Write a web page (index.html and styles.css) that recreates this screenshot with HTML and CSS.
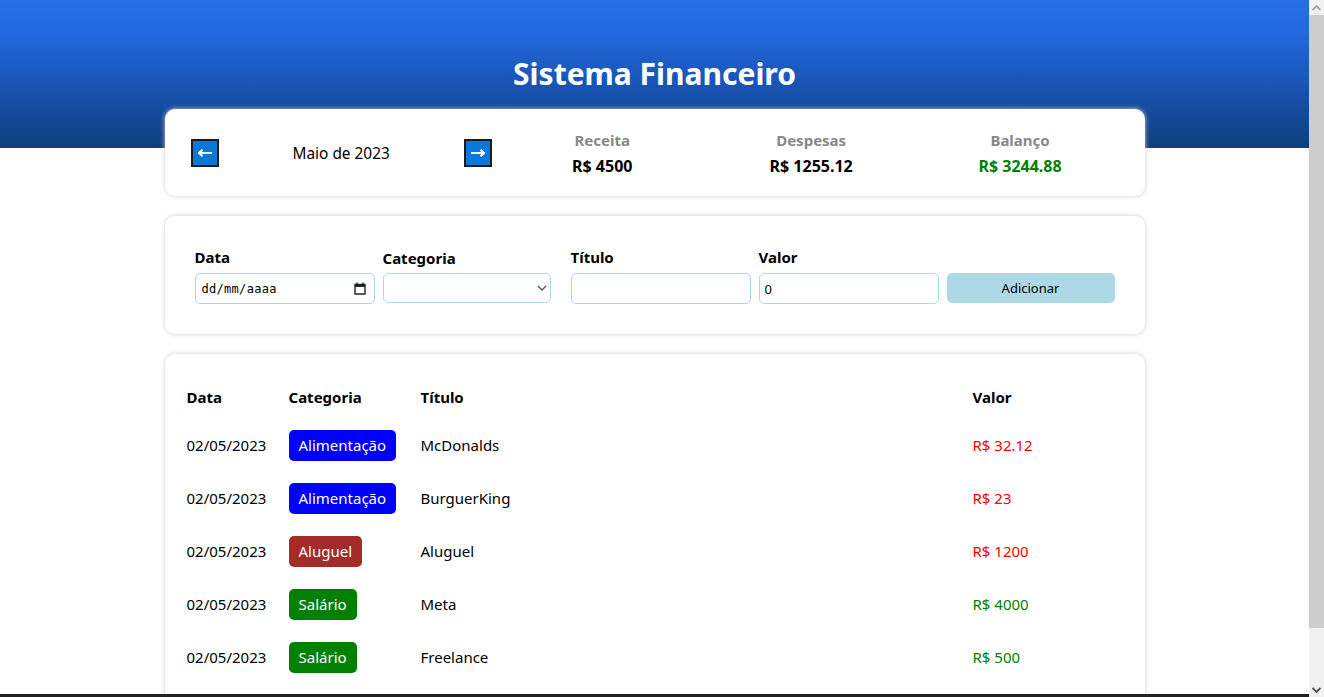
FILE: index.html
```html
<!DOCTYPE html>
<html lang="pt-BR">
<head>
<meta charset="utf-8">
<title>Sistema Financeiro</title>
<link rel="stylesheet" href="styles.css">
</head>
<body>
<header class="header">
  <h1 class="header-title">Sistema Financeiro</h1>
</header>
<main class="body">
  <section class="card info-area">
    <div class="month-area">
      <div class="month-arrow"><button class="arrow-btn" aria-label="Mês anterior"><svg width="16" height="10" viewBox="0 0 16 10"><path d="M15 5H2.5M5.5 1.8L2 5l3.5 3.2" fill="none" stroke="#fff" stroke-width="2"/></svg></button></div>
      <div class="month-title">Maio de 2023</div>
      <div class="month-arrow"><button class="arrow-btn" aria-label="Próximo mês"><svg width="16" height="10" viewBox="0 0 16 10"><path d="M1 5h12.5M10.5 1.8L14 5l-3.5 3.2" fill="none" stroke="#fff" stroke-width="2"/></svg></button></div>
    </div>
    <div class="resume-area">
      <div class="resume-item">
        <div class="resume-title">Receita</div>
        <div class="resume-info">R$ 4500</div>
      </div>
      <div class="resume-item">
        <div class="resume-title">Despesas</div>
        <div class="resume-info">R$ 1255.12</div>
      </div>
      <div class="resume-item">
        <div class="resume-title">Balanço</div>
        <div class="resume-info positive">R$ 3244.88</div>
      </div>
    </div>
  </section>

  <section class="card input-area">
    <label class="input-label">
      <div class="input-title">Data</div>
      <div class="field date-field"><span class="date-text">dd/mm/aaaa</span><svg class="cal-icon" width="12" height="13" viewBox="0 0 12 13"><path d="M1 2.5h10v9.5H1z" fill="none" stroke="#222" stroke-width="1.4"/><path d="M1 2h10v3H1z" fill="#222"/><path d="M3 0.5v2M9 0.5v2" stroke="#222" stroke-width="1.4"/></svg></div>
    </label>
    <label class="input-label">
      <div class="input-title cat-title">Categoria</div>
      <div class="select-wrap">
        <select class="select-field"><option></option><option>Alimentação</option><option>Aluguel</option><option>Salário</option></select>
        <svg class="chevron" width="10" height="6" viewBox="0 0 10 6"><path d="M1 1l4 4 4-4" fill="none" stroke="#555" stroke-width="1.3"/></svg>
      </div>
    </label>
    <label class="input-label">
      <div class="input-title">Título</div>
      <input class="field" type="text">
    </label>
    <label class="input-label">
      <div class="input-title">Valor</div>
      <input class="field" type="text" value="0">
    </label>
    <div class="input-label">
      <div class="input-title">&nbsp;</div>
      <button class="add-btn">Adicionar</button>
    </div>
  </section>

  <section class="card table-card">
    <table class="table">
      <thead>
        <tr>
          <th class="col-date">Data</th>
          <th class="col-cat">Categoria</th>
          <th>Título</th>
          <th class="col-value">Valor</th>
        </tr>
      </thead>
      <tbody>
        <tr><td>02/05/2023</td><td><span class="badge food">Alimentação</span></td><td>McDonalds</td><td class="neg">R$ 32.12</td></tr>
        <tr><td>02/05/2023</td><td><span class="badge food">Alimentação</span></td><td>BurguerKing</td><td class="neg">R$ 23</td></tr>
        <tr><td>02/05/2023</td><td><span class="badge rent">Aluguel</span></td><td>Aluguel</td><td class="neg">R$ 1200</td></tr>
        <tr><td>02/05/2023</td><td><span class="badge salary">Salário</span></td><td>Meta</td><td class="pos">R$ 4000</td></tr>
        <tr><td>02/05/2023</td><td><span class="badge salary">Salário</span></td><td>Freelance</td><td class="pos">R$ 500</td></tr>
      </tbody>
    </table>
  </section>
</main>
<div class="frame-edge"></div>
<div class="scrollbar" aria-hidden="true">
  <div class="sb-btn"><svg width="9" height="6" viewBox="0 0 9 6"><path d="M0.5 5L4.5 1l4 4" fill="none" stroke="#a3a3a3" stroke-width="1.8"/></svg></div>
  <div class="sb-thumb"></div>
  <div class="sb-track"></div>
  <div class="sb-btn"><svg width="9" height="6" viewBox="0 0 9 6"><path d="M0.5 1l4 4 4-4" fill="none" stroke="#505050" stroke-width="1.8"/></svg></div>
</div>
</body>
</html>
```

FILE: styles.css
```css
html, body {
  margin: 0;
  padding: 0;
}
body {
  font-family: "Noto Sans", "Open Sans", sans-serif;
  font-size: 16px;
  color: #000;
  background: #fff;
  padding-right: 15px;
}
.header {
  height: 148px;
  background: linear-gradient(to bottom, #246ee6 0%, #2369e0 20%, #1a55b8 55%, #0e3e7c 100%);
  text-align: center;
  box-sizing: border-box;
  padding-top: 52px;
}
.header-title {
  margin: 0;
  color: #fff;
  font-size: 30px;
  line-height: 44px;
  font-weight: 700;
}
.body {
  max-width: 980px;
  margin: 0 auto;
  padding-bottom: 53px;
}
.card {
  background: #fff;
  border-radius: 10px;
  box-shadow: 0 0 5px #ccc;
  padding: 20px;
}
.info-area {
  margin-top: -39px;
  display: flex;
  align-items: center;
  height: 47px;
}
.month-area {
  flex: 1;
  display: flex;
  align-items: center;
}
.month-arrow {
  width: 40px;
  display: flex;
  justify-content: center;
}
.arrow-btn {
  width: 28px;
  height: 28px;
  box-sizing: border-box;
  padding: 0;
  margin-top: 1px;
  background: #0a78d8;
  border: 2px solid #1b1b1b;
  display: flex;
  align-items: center;
  justify-content: center;
}
.month-title {
  flex: 1;
  text-align: center;
  font-size: 15.4px;
  padding-top: 1px;
}
.resume-area {
  flex: 2;
  display: flex;
}
.resume-item {
  flex: 1;
  text-align: center;
}
.resume-title {
  color: #888;
  font-weight: 700;
  font-size: 15px;
  line-height: 22px;
}
.resume-info {
  font-weight: 700;
  font-size: 16px;
  line-height: 22px;
  margin-top: 4px;
}
.resume-info.positive {
  color: #008000;
}
.input-area {
  margin-top: 20px;
  display: flex;
  align-items: flex-start;
}
.input-label {
  flex: 1;
  margin: 10px;
  min-width: 0;
  display: block;
}
.input-title {
  font-weight: 700;
  font-size: 15px;
  line-height: 22px;
  height: 22px;
  margin-bottom: 5px;
}
.cat-title {
  position: relative;
  top: 1px;
}
.field {
  display: block;
  width: 100%;
  height: 19px;
  padding: 5px;
  border: 1px solid #add8e6;
  border-radius: 5px;
  font-family: "Noto Sans", sans-serif;
  font-size: 13px;
  outline: none;
  box-sizing: content-box;
}
input.field {
  margin: 0;
}
.date-field {
  display: flex;
  align-items: center;
  justify-content: space-between;
}
.date-text {
  font-family: "DejaVu Sans Mono", "Liberation Mono", monospace;
  font-size: 12px;
  padding-left: 1px;
  letter-spacing: 0.3px;
}
.cal-icon {
  margin-right: 3px;
}
.select-wrap {
  position: relative;
  margin-top: 1px;
}
.select-field {
  display: block;
  width: 100%;
  height: 30px;
  border: 1px solid #add8e6;
  border-radius: 5px;
  background: #fff;
  font-family: "Noto Sans", sans-serif;
  font-size: 13px;
  -webkit-appearance: none;
  appearance: none;
  padding: 0 24px 0 5px;
}
.chevron {
  position: absolute;
  right: 4px;
  top: 12px;
  pointer-events: none;
}
.add-btn {
  display: block;
  width: 100%;
  height: 30px;
  margin-top: 1px;
  padding: 0 5px;
  border: 0;
  border-radius: 5px;
  background: #add8e6;
  color: #000;
  font-family: "Noto Sans", sans-serif;
  font-size: 13px;
}
.table-card {
  margin-top: 20px;
}
.table {
  width: 100%;
  border-collapse: separate;
  border-spacing: 2px;
  margin-top: 1px;
}
.table th,
.table td {
  padding: 10px 0;
  text-align: left;
  line-height: 21px;
}
.table th {
  font-weight: 700;
  font-size: 15px;
}
.table td {
  font-size: 15px;
}
.col-date { width: 100px; }
.col-cat { width: 130px; }
.col-value { width: 150px; }
.badge {
  display: inline-block;
  padding: 5px 10px;
  border-radius: 5px;
  color: #fff;
}
.badge.food { background: #0000ff; }
.badge.rent { background: #a52a2a; }
.badge.salary { background: #008000; }
.neg { color: #ff0000; }
.pos { color: #008000; }
.frame-edge {
  position: fixed;
  left: 0;
  right: 15px;
  bottom: 0;
  height: 3px;
  background: #222;
}
.scrollbar {
  position: fixed;
  top: 0;
  right: 0;
  bottom: 0;
  width: 15px;
  background: #f1f1f1;
  display: flex;
  flex-direction: column;
}
.sb-btn {
  height: 15px;
  flex: none;
  display: flex;
  align-items: center;
  justify-content: center;
}
.sb-thumb {
  height: 613px;
  flex: none;
  background: #cdcdcd;
}
.sb-track {
  flex: 1;
}
```
